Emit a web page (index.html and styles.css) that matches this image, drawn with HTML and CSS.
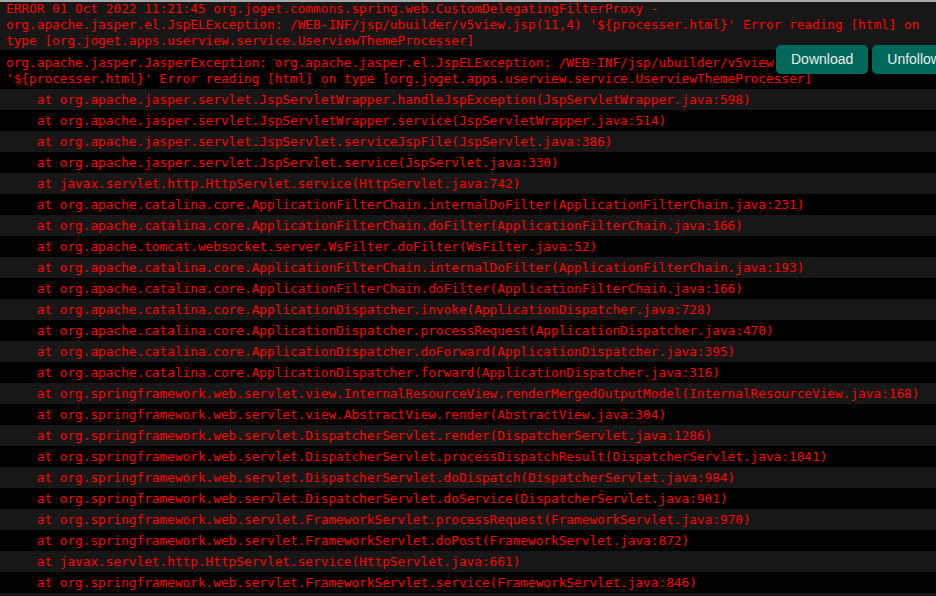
FILE: index.html
```html
<!DOCTYPE html>
<html lang="en">

<head>
    <meta charset="UTF-8">
    <meta name="viewport" content="width=device-width, initial-scale=1.0">
    <title>Log Viewer</title>
    <link rel="stylesheet" href="styles.css">
</head>

<body>
    <div class="top-border"></div>

    <div class="log">
        <div class="entry entry-head">ERROR 01 Oct 2022 11:21:45 org.joget.commons.spring.web.CustomDelegatingFilterProxy -<br>org.apache.jasper.el.JspELException: /WEB-INF/jsp/ubuilder/v5view.jsp(11,4) '${processer.html}' Error reading [html] on<br>type [org.joget.apps.userview.service.UserviewThemeProcesser]</div>
        <div class="entry entry-cause">org.apache.jasper.JasperException: org.apache.jasper.el.JspELException: /WEB-INF/jsp/ubuilder/v5view.jsp(11,4)<br>'${processer.html}' Error reading [html] on type [org.joget.apps.userview.service.UserviewThemeProcesser]</div>

        <div class="trace">
            <div class="frame">    at org.apache.jasper.servlet.JspServletWrapper.handleJspException(JspServletWrapper.java:598)</div>
            <div class="frame">    at org.apache.jasper.servlet.JspServletWrapper.service(JspServletWrapper.java:514)</div>
            <div class="frame">    at org.apache.jasper.servlet.JspServlet.serviceJspFile(JspServlet.java:386)</div>
            <div class="frame">    at org.apache.jasper.servlet.JspServlet.service(JspServlet.java:330)</div>
            <div class="frame">    at javax.servlet.http.HttpServlet.service(HttpServlet.java:742)</div>
            <div class="frame">    at org.apache.catalina.core.ApplicationFilterChain.internalDoFilter(ApplicationFilterChain.java:231)</div>
            <div class="frame">    at org.apache.catalina.core.ApplicationFilterChain.doFilter(ApplicationFilterChain.java:166)</div>
            <div class="frame">    at org.apache.tomcat.websocket.server.WsFilter.doFilter(WsFilter.java:52)</div>
            <div class="frame">    at org.apache.catalina.core.ApplicationFilterChain.internalDoFilter(ApplicationFilterChain.java:193)</div>
            <div class="frame">    at org.apache.catalina.core.ApplicationFilterChain.doFilter(ApplicationFilterChain.java:166)</div>
            <div class="frame">    at org.apache.catalina.core.ApplicationDispatcher.invoke(ApplicationDispatcher.java:728)</div>
            <div class="frame">    at org.apache.catalina.core.ApplicationDispatcher.processRequest(ApplicationDispatcher.java:470)</div>
            <div class="frame">    at org.apache.catalina.core.ApplicationDispatcher.doForward(ApplicationDispatcher.java:395)</div>
            <div class="frame">    at org.apache.catalina.core.ApplicationDispatcher.forward(ApplicationDispatcher.java:316)</div>
            <div class="frame">    at org.springframework.web.servlet.view.InternalResourceView.renderMergedOutputModel(InternalResourceView.java:168)</div>
            <div class="frame">    at org.springframework.web.servlet.view.AbstractView.render(AbstractView.java:304)</div>
            <div class="frame">    at org.springframework.web.servlet.DispatcherServlet.render(DispatcherServlet.java:1286)</div>
            <div class="frame">    at org.springframework.web.servlet.DispatcherServlet.processDispatchResult(DispatcherServlet.java:1041)</div>
            <div class="frame">    at org.springframework.web.servlet.DispatcherServlet.doDispatch(DispatcherServlet.java:984)</div>
            <div class="frame">    at org.springframework.web.servlet.DispatcherServlet.doService(DispatcherServlet.java:901)</div>
            <div class="frame">    at org.springframework.web.servlet.FrameworkServlet.processRequest(FrameworkServlet.java:970)</div>
            <div class="frame">    at org.springframework.web.servlet.FrameworkServlet.doPost(FrameworkServlet.java:872)</div>
            <div class="frame">    at javax.servlet.http.HttpServlet.service(HttpServlet.java:661)</div>
            <div class="frame">    at org.springframework.web.servlet.FrameworkServlet.service(FrameworkServlet.java:846)</div>
            <div class="frame">    at javax.servlet.http.HttpServlet.service(HttpServlet.java:742)</div>
        </div>
    </div>

    <div class="actions">
        <button type="button" class="btn">Download</button>
        <button type="button" class="btn">Unfollow</button>
    </div>
</body>

</html>
```

FILE: styles.css
```css
/* Log viewer: dark background, red monospace output */
html,
body {
    overflow: hidden;
}

body {
    margin: 0;
    padding: 0;
    background-color: #000;
    color: #ff0000;
    font-family: "DejaVu Sans Mono", "Liberation Mono", monospace;
    font-size: 12.75px;
    line-height: 16px;
}

.top-border {
    position: fixed;
    top: 0;
    left: 0;
    right: 0;
    height: 2px;
    background-color: #a8a8a8;
    z-index: 2;
}

.entry {
    padding: 0 6px;
    white-space: pre;
}

.entry-head {
    padding-top: 1px;
    padding-bottom: 1px;
    background-color: #171717;
}

.entry-cause {
    padding-top: 5px;
    padding-bottom: 2px;
    background-color: #000;
}

.frame {
    padding: 3px 6px 2px;
    white-space: pre;
}

.frame:nth-child(odd) {
    background-color: #171717;
}

/* Floating buttons over the log */
.actions {
    position: absolute;
    top: 45px;
    left: 776px;
    display: flex;
    gap: 4px;
    white-space: nowrap;
}

.btn {
    padding: 6px 15px;
    border: none;
    border-radius: 5px;
    background-color: #00695c;
    color: #ececec;
    font-family: "Liberation Sans", Arial, sans-serif;
    font-size: 14px;
    line-height: 17px;
    cursor: pointer;
}

.btn:hover {
    background-color: #004d40;
}
```
